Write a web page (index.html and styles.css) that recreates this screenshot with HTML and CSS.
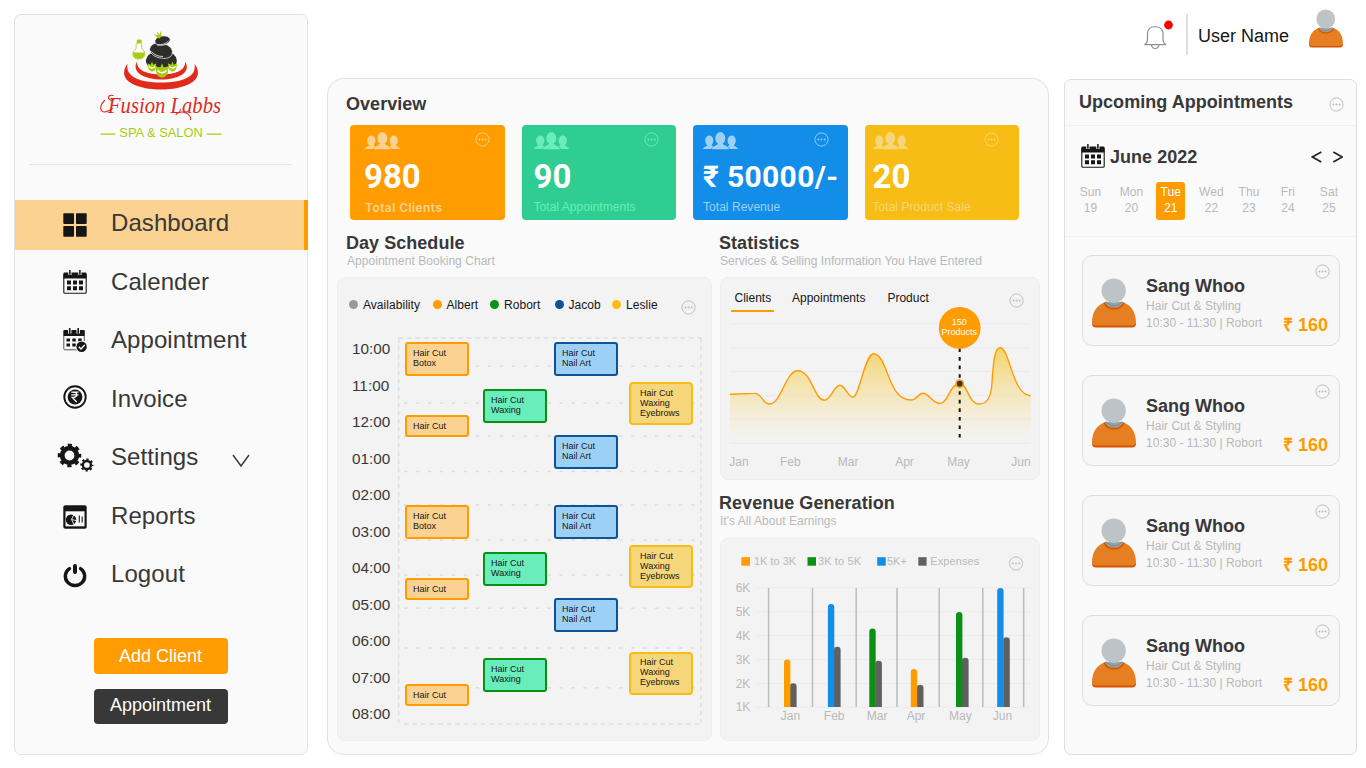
FILE: index.html
```html
<!DOCTYPE html>
<html lang="en">
<head>
<meta charset="utf-8">
<title>Fusion Labbs - Dashboard</title>
<link rel="stylesheet" href="styles.css">
</head>
<body>
<svg class="defs" aria-hidden="true">
  <symbol id="more" viewBox="0 0 15 15"><circle cx="7.5" cy="7.5" r="6.6" fill="none" stroke="currentColor" stroke-width=".9"/><circle cx="4.4" cy="7.5" r=".95" fill="currentColor"/><circle cx="7.5" cy="7.5" r=".95" fill="currentColor"/><circle cx="10.6" cy="7.5" r=".95" fill="currentColor"/></symbol>
  <symbol id="people" viewBox="0 0 35 18">
    <g fill="currentColor"><ellipse cx="6.3" cy="8.6" rx="4.1" ry="5"/><path d="M0 17c0-2 4-2.600 4.400-4h3.800l2 1.200L8 17z"/><ellipse cx="28.700" cy="8.600" rx="4.100" ry="5"/><path d="M35 17c0-2-4-2.600-4.400-4h-3.800l-2 1.200L27 17z"/><ellipse cx="17.300" cy="6.200" rx="5" ry="6.100"/><path d="M8.800 17.200c.3-3.600 6.200-3.200 6.200-6.200h4.700c0 3 6 2.600 6.300 6.200z"/></g>
  </symbol>
  <symbol id="calendar" viewBox="0 0 24 24">
    <path d="M.5 3.500q0-1 1-1h21q1 0 1 1V8.500H.5z" fill="#161616"/><rect x=".8" y="4" width="22.400" height="19.300" rx="1" fill="none" stroke="#161616" stroke-width="1.100"/>
    <path d="M6.900 0v5M16.900 0v5" stroke="#fafafa" stroke-width="3.200"/><path d="M6.900.3v4M16.900.3v4" stroke="#161616" stroke-width="1.500" stroke-linecap="round"/>
    <path d="M4 10.500h4v4H4zM10 10.500h4v4h-4zM16 10.500h4v4h-4zM4 16.300h4v4H4zM10 16.300h4v4h-4zM16 16.300h4v4h-4z" fill="#161616"/>
  </symbol>
  <symbol id="avatar" viewBox="0 0 44 50">
    <path d="M13 24h18v6H13z" fill="#95a5a6"/>
    <path d="M0 45C0 34 5 27 12.500 24.500c4 6.500 15 6.500 19 0C39 27 44 34 44 45q0 4-4 4H4q-4 0-4-4z" fill="#e67e22"/>
    <path d="M0 45q0 4.500 4 4.500h36q4 0 4-4.500-.8 2.600-4 2.600H4Q.8 47.600 0 45z" fill="#d35400"/>
    <path d="M12 24.600c4 8.300 16 8.300 20 0" fill="none" stroke="#d35400" stroke-width="1.500"/>
    <path d="M14 23.500c4 5.500 12 5.500 16 0" fill="none" stroke="#7f8c8d" stroke-width="1.200"/>
    <circle cx="21.700" cy="12.700" r="12.200" fill="#bdc3c7"/>
  </symbol>
  <symbol id="flower" viewBox="0 0 10 11"><path d="M5 0l1.400 3.500L10 2 9.500 7Q8 11 5 11T.5 7L0 2l3.600 1.500z" fill="#a6ce0e"/><path d="M1.500 5.500q3.500 3.500 7 0" stroke="#fff" stroke-width="1.200" fill="none"/></symbol>
</svg>

<div class="app">
  <aside class="sidebar">
    <div class="brand">
      <svg class="brand-logo" viewBox="90 26 142 118">
        <path d="M127.500 63.500C115 81.500 139 89.500 161 89.500s46-8 33.500-26c3 14-13.500 19-33.500 19s-36-5-33.500-19z" fill="#e12a1c"/>
        <path d="M137 61.500c-6 11 8 18 24.500 18S192 72.500 185 61.500c1 9-10 13-23.500 13S136 70.500 137 61.500z" fill="#e12a1c"/>
        <g fill="#2d2d2b" stroke="#fafafa" stroke-width=".7"><path d="M146 62q-.5-5 4.500-8.500l20-1q6.500 3 6.300 8.500-.3 5-5.800 6.500h-18q-6-.5-7-5.500z" stroke="none"/><path d="M149.500 49.500q1-6 7.500-6.500 13 0 15.500 8 .5 7.500-9 7.500-12-1-14-9z"/><ellipse cx="162.500" cy="40.600" rx="7.800" ry="4.600" transform="rotate(-10 162.500 40.600)"/></g>
        <path d="M151.500 51.500q4 5 11.500 5M157 45q8 0 11.500-4" fill="none" stroke="#fafafa" stroke-width=".8"/>
        <path d="M157.800 38l-4.300-4 4 1.500-.3-4.500 2 4 2-4.500.1 5-1.300 3z" fill="#a6ce0e"/>
        <path d="M137.300 40h4l-.5 3.500 1 .8v4.500q3 2 3 5 0 5.200-6 5.200t-6-5.200q0-3 3.300-5v-4.500l1-.8z" fill="#fff" stroke="#a6ce0e" stroke-width=".8"/>
        <path d="M137 40h4.300v3.500H137zM132.800 52.500h12q0 6.500-6 6.500t-6-6.500z" fill="#a6ce0e"/>
        <use href="#flower" x="147.500" y="61" width="9" height="11"/><use href="#flower" x="168" y="61" width="9" height="11"/><use href="#flower" x="155.500" y="62.500" width="13" height="16"/>
        <g fill="none" stroke="#e12a1c" stroke-width="1.100" stroke-linecap="round"><path d="M113 95.500C106 93.500 108 103 114 99.500M104.500 100.500C97 108 101 117 112.500 108.500M176 114.500C182 108.500 192 115 190.500 119.500"/></g>
        <text x="108" y="112.800" class="brand-name" textLength="113" lengthAdjust="spacingAndGlyphs">Fusion Labbs</text>
        <text x="119.300" y="137.300" class="brand-tag" textLength="83.500" lengthAdjust="spacingAndGlyphs">SPA &amp; SALON</text>
        <path d="M100.500 134.200H115.300M206.700 134.200H221.500" stroke="#a6ce0e" stroke-width="1.200"/>
      </svg>
    </div>
    <nav class="nav">
      <a class="nav-item active"><span class="nav-icon"><svg width="24" height="24" viewBox="0 0 24 24" fill="#161616"><rect x=".3" y=".3" width="10.700" height="10.700" rx=".8"/><rect x="13" y=".3" width="10.700" height="10.700" rx=".8"/><rect x=".3" y="13" width="10.700" height="10.700" rx=".8"/><rect x="13" y="13" width="10.700" height="10.700" rx=".8"/></svg></span><span>Dashboard</span></a>
      <a class="nav-item"><span class="nav-icon up"><svg width="24" height="24"><use href="#calendar"/></svg></span><span>Calender</span></a>
      <a class="nav-item"><span class="nav-icon up"><svg width="24" height="24" viewBox="0 0 24 24"><path d="M.3 3q0-1 1-1h19.500q1 0 1 1v5H.3z" fill="#161616"/><path d="M.8 8v12.800q0 1 1 1H14M21.300 8v5" stroke="#555" fill="none"/><path d="M6.700 0v5.500M15.200 0v5.500" stroke="#fafafa" stroke-width="3.400"/><path d="M6.700.5v4.600M15.200.5v4.600" stroke="#161616" stroke-width="1.600" stroke-linecap="round"/><path d="M3.500 10.500H7v3H3.500zM9.300 10.500h3.500v3H9.300zM15.200 10.500h3.500v3h-3.500zM3.500 15.500H7v3H3.500zM9.300 15.500h3.500v3H9.300z" fill="#161616"/><circle cx="18.600" cy="18.700" r="6" fill="#fafafa"/><circle cx="18.600" cy="18.700" r="5.200" fill="#161616"/><path d="M15.800 18.700l2.200 2.200 3.700-4" stroke="#fff" stroke-width="1.400" fill="none"/></svg></span><span>Appointment</span></a>
      <a class="nav-item"><span class="nav-icon up"><svg class="coin" width="24" height="24" viewBox="0 0 24 24"><circle cx="12" cy="12" r="10.700" fill="none" stroke="#161616" stroke-width="1.900"/><circle cx="12" cy="12" r="7.400" fill="#161616"/><path d="M8.300 7.200h7.200M8.300 9.800h7.200M9.500 7.200q4.200 0 4.200 2.600 0 2.700-4.500 2.700l4.600 4.500" fill="none" stroke="#fff" stroke-width="1.300"/></svg></span><span>Invoice</span></a>
      <a class="nav-item"><span class="nav-icon wide"><svg width="38" height="30" viewBox="0 0 38 30"><circle cx="12.500" cy="12.500" r="7.300" fill="none" stroke="#161616" stroke-width="4.800"/><circle cx="12.500" cy="12.500" r="10.300" fill="none" stroke="#161616" stroke-width="3" stroke-dasharray="4.200 3.889" stroke-dashoffset="2.100"/><circle cx="29.900" cy="22" r="4" fill="none" stroke="#161616" stroke-width="2.300"/><circle cx="29.900" cy="22" r="5.600" fill="none" stroke="#161616" stroke-width="2" stroke-dasharray="2.200 2.198" stroke-dashoffset="1.100"/></svg></span><span>Settings</span><svg class="caret" width="18" height="14" viewBox="0 0 18 14"><path d="M1 1l8 11 8-11" fill="none" stroke="#383838" stroke-width="1.400"/></svg></a>
      <a class="nav-item"><span class="nav-icon"><svg width="24" height="24" viewBox="0 0 24 24"><rect x=".3" y=".3" width="23.400" height="23.400" rx="2" fill="#161616"/><path d="M2.500 6.300h19v15h-19z" fill="#fafafa"/><circle cx="8" cy="14.700" r="5.200" fill="#161616"/><path d="M8.500 14.500L11 9.500M8.500 14.500l4.500 1M8.500 14.500l2.500 5" stroke="#fafafa" stroke-width=".9"/><path d="M16.300 10.500v7M19.200 11.500v6" stroke="#161616" stroke-width="1.100"/></svg></span><span>Reports</span></a>
      <a class="nav-item"><span class="nav-icon"><svg width="24" height="24" viewBox="0 0 24 24"><path d="M6.500 4.600a9.700 9.300 0 1 0 11 0" fill="none" stroke="#161616" stroke-width="3.400" stroke-linecap="round"/><path d="M12 2v6" stroke="#161616" stroke-width="4" stroke-linecap="round"/></svg></span><span>Logout</span></a>
    </nav>
    <div class="actions">
      <button class="btn btn-primary">Add Client</button>
      <button class="btn btn-dark">Appointment</button>
    </div>
  </aside>

  <div class="content">
    <header class="topbar">
      <svg class="bell" width="30" height="30" viewBox="0 0 30 30"><g fill="none" stroke="#8f8f8f" stroke-width="1.200"><path d="M1.500 24.600Q4.500 23 4.500 19v-6Q5 7 12 6.500q7.500.5 8 6.500v6q0 4 3 5.600z"/><path d="M8.500 25q.5 3.500 3.700 3.500t3.700-3.500"/></g><circle cx="25.500" cy="5" r="4.400" fill="#f00"/></svg>
      <span class="topbar-rule"></span>
      <span class="user-name">User Name</span>
      <svg class="user-avatar" width="34" height="39"><use href="#avatar"/></svg>
    </header>

    <div class="panels">
      <main class="main">
        <h2 class="title title-overview">Overview</h2>
        <section class="kpis">
          <article class="kpi kpi-orange"><svg class="people" width="35" height="18"><use href="#people"/></svg><svg class="more" width="15" height="15"><use href="#more"/></svg><strong>980</strong><span class="label-strong">Total Clients</span></article>
          <article class="kpi kpi-green"><svg class="people" width="35" height="18"><use href="#people"/></svg><svg class="more" width="15" height="15"><use href="#more"/></svg><strong>90</strong><span>Total Appointments</span></article>
          <article class="kpi kpi-blue"><svg class="people" width="35" height="18"><use href="#people"/></svg><svg class="more" width="15" height="15"><use href="#more"/></svg><strong class="amount">₹ 50000/-</strong><span>Total Revenue</span></article>
          <article class="kpi kpi-yellow"><svg class="people" width="35" height="18"><use href="#people"/></svg><svg class="more" width="15" height="15"><use href="#more"/></svg><strong>20</strong><span>Total Product Sale</span></article>
        </section>

        <div class="columns">
          <section class="col-schedule">
            <h2 class="title">Day Schedule</h2>
            <p class="subtitle">Appointment Booking Chart</p>
            <div class="card schedule">
              <div class="legend">
                <span class="who grey">Availability</span><span class="who orange">Albert</span><span class="who green">Robort</span><span class="who navy">Jacob</span><span class="who yellow">Leslie</span>
                <svg class="more-grey" width="15" height="15"><use href="#more"/></svg>
              </div>
              <div class="day">
                <div class="hours"><span>10:00</span><span>11:00</span><span>12:00</span><span>01:00</span><span>02:00</span><span>03:00</span><span>04:00</span><span>05:00</span><span>06:00</span><span>07:00</span><span>08:00</span></div>
                <div class="board">
                  <svg class="board-lines" width="304" height="388" viewBox="398 337 304 388" fill="none" stroke="#dedede" stroke-width="1.500">
                    <path d="M398.500 338H702M404 724H702" stroke-dasharray="4.500 4.050"/><path d="M398.700 338V725M701 338V725" stroke-dasharray="4.500 3.600"/>
                    <path d="M404 366.300H697M404 403H697M404 436.200H697M404 471.500H697M404 505H697M404 540.300H697M404 575H697M404 608.200H697M404 648H697M404 687.700H697" stroke-dasharray="3.500 8.450"/>
                  </svg>
                  <div class="staff">
                    <div class="lane">
                      <div class="event albert two" style="--start:5">Hair Cut<br>Botox</div><div class="event albert one" style="--start:78">Hair Cut</div><div class="event albert two" style="--start:168">Hair Cut<br>Botox</div><div class="event albert one" style="--start:241">Hair Cut</div><div class="event albert one" style="--start:347">Hair Cut</div>
                    </div>
                    <div class="lane">
                      <div class="event robort two" style="--start:52.4">Hair Cut<br>Waxing</div><div class="event robort two" style="--start:215">Hair Cut<br>Waxing</div><div class="event robort two" style="--start:321.4">Hair Cut<br>Waxing</div>
                    </div>
                    <div class="lane">
                      <div class="event jacob two" style="--start:5">Hair Cut<br>Nail Art</div><div class="event jacob two" style="--start:98">Hair Cut<br>Nail Art</div><div class="event jacob two" style="--start:168">Hair Cut<br>Nail Art</div><div class="event jacob two" style="--start:261">Hair Cut<br>Nail Art</div>
                    </div>
                    <div class="lane">
                      <div class="event leslie" style="--start:45.400">Hair Cut<br>Waxing<br>Eyebrows</div><div class="event leslie" style="--start:208">Hair Cut<br>Waxing<br>Eyebrows</div><div class="event leslie" style="--start:314.700">Hair Cut<br>Waxing<br>Eyebrows</div>
                    </div>
                  </div>
                </div>
              </div>
            </div>
          </section>

          <section class="col-charts">
            <h2 class="title">Statistics</h2>
            <p class="subtitle">Services &amp; Selling Information You Have Entered</p>
            <div class="card stats">
              <div class="tabs"><span class="tab current">Clients</span><span class="tab">Appointments</span><span class="tab">Product</span><svg class="more-grey" width="15" height="15"><use href="#more"/></svg></div>
              <svg class="area-chart" width="318" height="172" viewBox="721 307 318 172">
                <defs><linearGradient id="fade" gradientUnits="userSpaceOnUse" x1="0" y1="348" x2="0" y2="442"><stop offset="0" stop-color="#f5d36c"/><stop offset="1" stop-color="#f5e3a4" stop-opacity="0"/></linearGradient></defs>
                <path d="M730 323.700H1030M730 348H1030M730 371.500H1030M730 395.500H1030M730 419.500H1030M730 443.300H1030" stroke="#ececec" stroke-width="1.300"/>
                <path d="M730 443V394.300L754 393.400C762 392.500 762 404 769.500 404C781 404 786 370.700 797.500 370.700C812 370.700 814 400.200 824.300 400.200C831 400.200 834 385.300 839.800 385.300C845 385.300 848 397.300 853 397.300C859 397.300 865 353.700 873.500 353.700C888 353.700 887 400 911 400C917 400 918 393.300 923 393.300C929 393.300 932 403.500 940 403.500C948 403.500 950 383.700 959.700 383.700C968 383.700 968 404 979.500 404C986 404 990 399 991.500 388C993 374 993 347.700 1000 347.700C1010 347.700 1012 395 1030.500 395.700V443Z" fill="url(#fade)"/>
                <path d="M730 394.300L754 393.400C762 392.500 762 404 769.500 404C781 404 786 370.700 797.500 370.700C812 370.700 814 400.200 824.300 400.200C831 400.200 834 385.300 839.800 385.300C845 385.300 848 397.300 853 397.300C859 397.300 865 353.700 873.500 353.700C888 353.700 887 400 911 400C917 400 918 393.300 923 393.300C929 393.300 932 403.500 940 403.500C948 403.500 950 383.700 959.700 383.700C968 383.700 968 404 979.500 404C986 404 990 399 991.500 388C993 374 993 347.700 1000 347.700C1010 347.700 1012 395 1030.500 395.700" fill="none" stroke="#ff9c00" stroke-width="1.400"/>
                <path d="M959.700 348.500V438" stroke="#111" stroke-width="2" stroke-dasharray="3.600 4.950"/>
                <circle cx="959.700" cy="383.700" r="3.600" fill="#383838" stroke="#ff9c00" stroke-width="1.500"/>
                <circle cx="959.700" cy="327.900" r="20.900" fill="#ff9c00"/>
                <g class="bubble-text"><text x="959.200" y="325.300">150</text><text x="959.200" y="335.300">Products</text></g>
                <g class="axis"><text x="729.300" y="466">Jan</text><text x="780" y="466">Feb</text><text x="837.800" y="466">Mar</text><text x="895.200" y="466">Apr</text><text x="947.200" y="466">May</text><text x="1011.300" y="466">Jun</text></g>
              </svg>
            </div>

            <h2 class="title title-revenue">Revenue Generation</h2>
            <p class="subtitle">It's All About Earnings</p>
            <div class="card revenue">
              <svg width="318" height="201" viewBox="721 539 318 201">
                <path d="M741.300 557.200h8.700v8.500h-8.700z" fill="#ff9c00"/><path d="M807.500 557.200h8.500v8.500h-8.500z" fill="#0a9113"/><path d="M877.200 557.200h8.500v8.500h-8.500z" fill="#128ee8"/><path d="M918.300 557.200h8.300v8.500h-8.300z" fill="#606060"/>
                <g class="series"><text x="754" y="564.500">1K to 3K</text><text x="818" y="564.500" textLength="43">3K to 5K</text><text x="887" y="564.500">5K+</text><text x="930.300" y="564.500" textLength="49">Expenses</text></g>
                <path d="M755 587.700H1030M755 611.700H1030M755 635.500H1030M755 659.500H1030M755 683.500H1030M755 707.300H1030" stroke="#ececec" stroke-width="1"/>
                <path d="M768.600 588V707M812.500 588V707M856.200 588V707M897 588V707M939.200 588V707M982.800 588V707M1023.700 588V707" stroke="#bcbcbc" stroke-width="1.500"/>
                <g fill="#606060"><path d="M790 707V686.600a3.300 3.300 0 0 1 6.600 0V707zM834 707V650a3.300 3.300 0 0 1 6.600 0V707zM875.300 707V664a3.300 3.300 0 0 1 6.600 0V707zM916.900 707V688a3.300 3.300 0 0 1 6.600 0V707zM962 707V661a3.300 3.300 0 0 1 6.600 0V707zM1003.200 707V640.500a3.300 3.300 0 0 1 6.600 0V707z"/></g>
                <path d="M784 707V662.700a3.200 3.200 0 0 1 6.400 0V707zM910.800 707V672.200a3.200 3.200 0 0 1 6.400 0V707z" fill="#ff9c00"/><path d="M827.900 707V607.200a3.200 3.200 0 0 1 6.400 0V707zM997.200 707V591.200a3.200 3.200 0 0 1 6.400 0V707z" fill="#128ee8"/><path d="M869.300 707V631.700a3.200 3.200 0 0 1 6.400 0V707zM956 707V615.200a3.200 3.200 0 0 1 6.400 0V707z" fill="#0a9113"/>
                <g class="axis"><text x="735.700" y="592">6K</text><text x="735.700" y="616">5K</text><text x="735.700" y="639.700">4K</text><text x="735.700" y="663.600">3K</text><text x="735.700" y="687.500">2K</text><text x="735.700" y="711.400">1K</text><text x="780.800" y="720">Jan</text><text x="823.800" y="720">Feb</text><text x="866.800" y="720">Mar</text><text x="906.700" y="720">Apr</text><text x="949" y="720">May</text><text x="992.800" y="720">Jun</text></g>
                <use href="#more" x="1008.500" y="556" width="15" height="15" color="#b9b9b9"/>
              </svg>
            </div>
          </section>
        </div>
      </main>

      <aside class="upcoming">
        <div class="upcoming-head"><h2 class="title">Upcoming Appointments</h2><svg class="more-grey" width="15" height="15"><use href="#more"/></svg></div>
        <div class="week">
          <div class="month"><svg width="24" height="24"><use href="#calendar"/></svg><h2 class="title">June 2022</h2><svg class="arrows" width="32" height="12" viewBox="0 0 32 12"><path d="M10.300 1L1.300 6l9 5M22.300 1l9 5-9 5" fill="none" stroke="#222" stroke-width="1.700"/></svg></div>
          <div class="days"><div class="date">Sun<br>19</div><div class="date">Mon<br>20</div><div class="date today">Tue<br>21</div><div class="date">Wed<br>22</div><div class="date">Thu<br>23</div><div class="date">Fri<br>24</div><div class="date">Sat<br>25</div></div>
        </div>
        <div class="bookings">
          <article class="booking"><svg class="face" width="44" height="50"><use href="#avatar"/></svg><div class="who-info"><h3>Sang Whoo</h3><p>Hair Cut &amp; Styling</p><p>10:30 - 11:30 | Robort</p></div><div class="price"><svg class="more-grey" width="15" height="15"><use href="#more"/></svg><b>₹ 160</b></div></article>
          <article class="booking"><svg class="face" width="44" height="50"><use href="#avatar"/></svg><div class="who-info"><h3>Sang Whoo</h3><p>Hair Cut &amp; Styling</p><p>10:30 - 11:30 | Robort</p></div><div class="price"><svg class="more-grey" width="15" height="15"><use href="#more"/></svg><b>₹ 160</b></div></article>
          <article class="booking"><svg class="face" width="44" height="50"><use href="#avatar"/></svg><div class="who-info"><h3>Sang Whoo</h3><p>Hair Cut &amp; Styling</p><p>10:30 - 11:30 | Robort</p></div><div class="price"><svg class="more-grey" width="15" height="15"><use href="#more"/></svg><b>₹ 160</b></div></article>
          <article class="booking"><svg class="face" width="44" height="50"><use href="#avatar"/></svg><div class="who-info"><h3>Sang Whoo</h3><p>Hair Cut &amp; Styling</p><p>10:30 - 11:30 | Robort</p></div><div class="price"><svg class="more-grey" width="15" height="15"><use href="#more"/></svg><b>₹ 160</b></div></article>
        </div>
      </aside>
    </div>
  </div>
</div>
</body>
</html>
```
FILE: styles.css
```css
* { box-sizing: border-box; margin: 0; padding: 0; }
body { width: 1366px; height: 768px; overflow: hidden; background: #fff; font-family: "Liberation Sans", Arial, sans-serif; color: #383838; }
svg { display: block; flex: none; }
.defs { position: absolute; width: 0; height: 0; }

.app { display: flex; padding-left: 14px; }

/* Sidebar */
.sidebar { width: 294px; height: 741px; margin-top: 14px; border: 1px solid #e2e2e2; border-radius: 7px; background: #fafafa; }
.brand { height: 150px; margin: 0 15px 0 14px; padding: 11px 0 0 61px; border-bottom: 1.5px solid #e4e4e4; }
.brand-logo { width: 142px; height: 118px; overflow: visible; }
.brand-name { font: italic 24px "Liberation Serif", serif; fill: #e12a1c; }
.brand-tag { font-size: 13px; fill: #a6ce0e; }
.nav { display: flex; flex-direction: column; gap: 8.5px; margin-top: 35px; margin-right: -1px; }
.nav-item { display: flex; align-items: center; height: 50px; padding-bottom: 4px; font-size: 24px; line-height: 28px; letter-spacing: .08px; }
.nav-item.active { background: #fbd291; border-right: 4px solid #ff9c00; }
.nav-icon { display: flex; width: 96px; padding: 3px 0 0 48px; }
.nav-icon.up { padding-top: 0; }
.nav-icon.wide { padding: 2px 0 0 42px; }
.coin { margin-top: -3px; }
.caret { margin: 7px 0 0 34px; }
.actions { display: flex; flex-direction: column; align-items: center; gap: 15px; margin-top: 37px; }
.btn { width: 134px; height: 35.5px; border: 0; border-radius: 4px; font: 18px/36px "Liberation Sans", Arial, sans-serif; color: #fff; }
.btn-primary { background: #ff9c00; padding-right: 1px; }
.btn-dark { background: #383838; line-height: 32px; padding: 0 1px 4px 0; }

/* Top bar */
.content { margin-left: 19px; }
.topbar { display: flex; height: 78px; padding: 10px 23px 0 816px; }
.bell { margin-top: 10px; }
.topbar-rule { width: 2px; height: 41px; margin: 4px 0 0 13px; background: #dedede; }
.user-name { margin: 16px 0 0 10px; width: 92px; font-size: 18px; line-height: 21px; color: #161616; white-space: nowrap; }
.user-avatar { margin: -1px 0 0 19px; }
.panels { display: flex; gap: 15px; }

/* Main panel */
.main { width: 722px; height: 677px; padding-top: 15px; border: 1px solid #e2e2e2; border-radius: 17px; background: #fafafa; }
.title { font-size: 18px; line-height: 20px; font-weight: 700; white-space: nowrap; letter-spacing: .04px; }
.subtitle { margin-top: 1px; font-size: 12px; line-height: 14px; letter-spacing: .04px; color: #b9b9b9; white-space: nowrap; }
.title-overview { margin: 0 0 11px 18px; }
.kpis { display: flex; gap: 17px; margin-left: 22px; }
.kpi { display: grid; grid-template-columns: minmax(0, 1fr) 15px; grid-template-rows: 26px 36px 24px; width: 154.5px; height: 95px; border-radius: 4px; color: #fbd291; }
.kpi strong { grid-column: 1 / 3; font: 700 33px/36px Roboto, sans-serif; color: #fff; padding-top: 1px; white-space: nowrap; }
.kpi strong.amount { font-size: 30px; letter-spacing: .35px; }
.kpi span { grid-column: 1 / 3; margin-top: 6px; font-size: 12px; line-height: 14px; letter-spacing: .04px; white-space: nowrap; }
.kpi .label-strong { font-family: Inter, sans-serif; font-weight: 600; letter-spacing: .42px; margin-top: 7px; }
.kpi-orange { background: #ff9c00; padding: 7px 14.5px 0 15px; }
.kpi-orange strong { margin-left: -1px; }
.kpi-green { background: #2fcd91; color: #69edba; padding: 7px 17px 0 12px; }
.kpi-blue { background: #128ee8; color: #9dd0f5; padding: 7px 19px 0 10px; }
.kpi-yellow { background: #f8bd14; color: #f5d67b; padding: 7px 20.5px 0 8px; }
.columns { display: flex; gap: 8px; margin: 13px 0 0 9px; }
.col-schedule { width: 375px; }
.col-schedule .title, .col-schedule .subtitle { margin-left: 9px; }
.col-schedule .subtitle { margin-left: 10px; }
.col-charts { width: 320px; }
.col-charts .title { margin-left: -1px; }
.card { margin-top: 9px; border: 1px solid #eee; border-radius: 8px; background: #f3f3f3; }
.more-grey { color: #b9b9b9; }

/* Day schedule */
.schedule { height: 464px; padding: 20px 0 0 11px; }
.legend { display: grid; grid-template-columns: 83.5px 57.5px 64.5px 57.5px 68.5px 15px; height: 15px; font-size: 12px; line-height: 14px; color: #161616; }
.legend .more-grey { margin-top: 2px; }
.who { display: flex; align-items: center; gap: 5px; margin: -2px 0 2px; letter-spacing: .04px; }
.who::before { content: ""; width: 9px; height: 9px; border-radius: 50%; background: var(--dot); }
.grey { --dot: #999; }
.orange { --dot: #ff9c00; }
.green { --dot: #0a9113; }
.navy { --dot: #0e5299; }
.yellow { --dot: #f8bd14; }
.day { display: flex; margin-top: 24px; }
.hours { display: flex; flex-direction: column; width: 46px; margin: -6px 3px 0 0; padding-left: 3px; }
.hours span { height: 36.56px; font-size: 15.3px; line-height: 36.56px; white-space: nowrap; }
.board { display: grid; }
.board-lines { grid-area: 1 / 1; }
.staff { grid-area: 1 / 1; display: grid; grid-template-columns: 78px 71px 75px 64px; padding-left: 7px; }
.lane { display: grid; align-items: start; height: 388px; }
.event { grid-area: 1 / 1; width: 64px; height: 43px; margin-top: calc(var(--start) * 1px); padding: 3.5px 0 0 6px; border: 2px solid; border-radius: 3px; font-size: 9px; line-height: 10.1px; color: #161616; white-space: nowrap; }
.two { height: 34px; }
.one { height: 22px; }
.event.albert { background: #fbd291; border-color: #ff9c00; }
.event.robort { background: #69edba; border-color: #0a9113; }
.event.jacob { background: #9dd0f5; border-color: #0e5299; }
.event.leslie { background: #f5d67b; border-color: #f8bd14; padding-left: 9px; border-radius: 4px; }

/* Charts */
.stats { height: 203px; }
.tabs { display: flex; height: 29px; padding: 13px 0 0 10px; font-size: 12px; line-height: 15px; color: #161616; }
.tab { height: 21px; margin-right: 14px; padding: 0 4px; }
.tab.current { width: 43px; padding: 0 3.5px; border-bottom: 2px solid #ff9c00; }
.tabs .more-grey { margin: 2px 15px 0 auto; }
.bubble-text { font-size: 9px; fill: #fff; text-anchor: middle; }
.axis { font-size: 12px; fill: #b9b9b9; }
.series { font-size: 11px; fill: #b9b9b9; }
.title-revenue { margin-top: 13px; }
.revenue { height: 203px; margin-top: 10px; }

/* Upcoming appointments */
.upcoming { width: 293px; height: 676px; margin-top: 1px; border: 1px solid #dedede; border-radius: 7px; background: #fafafa; }
.upcoming-head { display: flex; height: 46px; padding: 12px 12px 0 14px; border-bottom: 1px solid #f0f0f0; justify-content: space-between; }
.upcoming-head .more-grey { margin-top: 5px; }
.week { height: 111px; border-bottom: 1px solid #f0f0f0; }
.month { display: flex; gap: 5px; padding: 18px 13px 0 16px; }
.month .title { margin-top: 3px; }
.arrows { margin: 7px 0 0 auto; }
.days { display: grid; grid-template-columns: 41px 41px 37.6px 43.8px 31.2px 46.8px 35.2px; margin: 14px 0 0 5px; justify-items: center; }
.date { width: 29px; height: 38px; padding-top: 2px; border-radius: 3px; text-align: center; font-size: 12px; line-height: 16px; color: #b9b9b9; letter-spacing: .1px; }
.date.today { background: #ff9c00; color: #fff; }
.bookings { display: flex; flex-direction: column; gap: 29px; margin: 18px 16px 0 17px; }
.booking { display: flex; height: 91px; padding-left: 9px; border: 1px solid #dedede; border-radius: 10px; background: #f7f7f7; }
.face { margin-top: 22px; }
.who-info { margin: 20px 0 0 10px; }
.who-info h3 { font-size: 18px; line-height: 20px; }
.who-info p { margin-top: 3px; font-size: 12px; line-height: 14px; letter-spacing: .02px; color: #b9b9b9; white-space: nowrap; }
.price { display: flex; flex-direction: column; align-items: flex-end; margin: 8px 9px 0 auto; }
.price b { margin: 36px 2px 0 -20px; font-size: 18px; line-height: 20px; color: #ff9c00; white-space: nowrap; }
```
